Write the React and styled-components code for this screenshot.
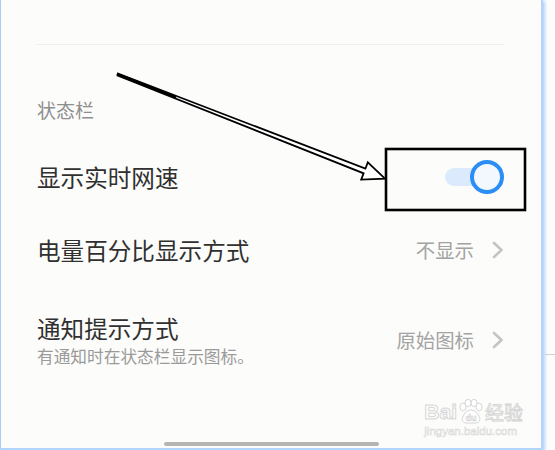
import styled, { createGlobalStyle } from "styled-components";

const GlobalStyle = createGlobalStyle`
  html, body {
    margin: 0;
    padding: 0;
    background: #fdfdfd;
  }
  body {
    font-family: "Noto Sans CJK SC", "Noto Sans", sans-serif;
    overflow: hidden;
  }
`;

function Chevron() {
  return (
    <svg width="12" height="18" viewBox="0 0 12 18">
      <polyline
        points="2,2 9.5,9 2,16"
        fill="none"
        stroke="#c4c4c4"
        strokeWidth="2.6"
        strokeLinecap="round"
        strokeLinejoin="round"
      />
    </svg>
  );
}

function Annotation() {
  return (
    <Overlay width="555" height="450" viewBox="0 0 555 450">
      <rect x="386" y="149" width="139" height="61" fill="none" stroke="#000" strokeWidth="2.6" />
      <polygon
        points="118,73.5 365.4,168.7 367.8,162.4 385,178.6 361.2,179.6 363.6,173.3 117.5,75.5"
        fill="#fff"
        stroke="#000"
        strokeWidth="1.8"
        strokeLinejoin="miter"
      />
      <line x1="118" y1="74.5" x2="175" y2="97" stroke="#000" strokeWidth="2.6" strokeLinecap="round" />
    </Overlay>
  );
}

function Watermark() {
  return (
    <Mark>
      <MarkTop>
        <MarkBig>Bai</MarkBig>
        <Paw>
          <svg width="26" height="26" viewBox="0 0 26 26">
            <g fill="#fff" stroke="#d6d6d6" strokeWidth="1">
              <ellipse cx="6" cy="8" rx="3" ry="4" />
              <ellipse cx="11" cy="4" rx="3" ry="3.6" />
              <ellipse cx="17" cy="4" rx="3" ry="3.6" />
              <ellipse cx="22" cy="8" rx="3" ry="4" />
              <path d="M5 20 Q8 11 14 11 Q20 11 23 20 Q23 25 14 24 Q5 25 5 20 Z" />
            </g>
            <text x="14" y="22" textAnchor="middle" fontSize="9" fill="#fff" stroke="#d0d0d0" strokeWidth="0.6" fontFamily="Liberation Sans, sans-serif" fontWeight="bold">du</text>
          </svg>
        </Paw>
        <MarkCn>经验</MarkCn>
      </MarkTop>
      <MarkUrl>jingyan.baidu.com</MarkUrl>
    </Mark>
  );
}

export default function App() {
  return (
    <>
      <GlobalStyle />
      <Stage>
        <Screen>
          <TopSpace />
          <Divider />
          <SectionHeader>状态栏</SectionHeader>

          <Row $h={70}>
            <Title>显示实时网速</Title>
            <Toggle>
              <Track />
              <Knob />
            </Toggle>
          </Row>

          <Row $h={76}>
            <Title>电量百分比显示方式</Title>
            <Value>
              不显示
              <Chevron />
            </Value>
          </Row>

          <Row $h={104}>
            <TextBlock>
              <Title>通知提示方式</Title>
              <Subtitle>有通知时在状态栏显示图标。</Subtitle>
            </TextBlock>
            <Value>
              原始图标
              <Chevron />
            </Value>
          </Row>

          <Spacer />
          <HomeBar />
          <Watermark />
        </Screen>
        <Side>
          <SideLine />
        </Side>
        <Annotation />
      </Stage>
    </>
  );
}

const Stage = styled.div`
  position: relative;
  width: 555px;
  height: 450px;
  display: flex;
`;

const Screen = styled.div`
  position: relative;
  flex-shrink: 0;
  width: 543px;
  height: 450px;
  padding: 0 37px 0 36px;
  box-sizing: border-box;
  background: #fcfcfa;
  border-left: 1px solid #a9cdf6;
  border-right: 2px solid #b3d5fb;
  border-bottom: 2px solid #b3d5fb;
  box-shadow: 2px 1px 3px rgba(120, 175, 240, 0.55);
  display: flex;
  flex-direction: column;
`;

const Side = styled.div`
  flex: 1;
  padding-top: 354px;
  margin-left: 2px;
`;

const SideLine = styled.div`
  height: 1px;
  background: #d2d2d2;
`;

const TopSpace = styled.div`
  height: 44px;
`;

const Divider = styled.div`
  height: 1px;
  background: #efefed;
`;

const SectionHeader = styled.div`
  margin-top: 53px;
  margin-bottom: 20px;
  font-size: 19px;
  line-height: 24px;
  color: #8e8e8e;
`;

const Row = styled.div`
  height: ${({ $h }) => $h}px;
  display: flex;
  align-items: center;
  justify-content: space-between;
`;

const TextBlock = styled.div`
  display: flex;
  flex-direction: column;
  gap: 2px;
`;

const Title = styled.div`
  font-size: 23.6px;
  line-height: 30px;
  color: #303030;
`;

const Subtitle = styled.div`
  font-size: 16.7px;
  line-height: 22px;
  color: #9a9a9a;
`;

const Value = styled.div`
  display: flex;
  align-items: center;
  gap: 18px;
  font-size: 19.4px;
  line-height: 26px;
  color: #a3a3a3;
`;

const Toggle = styled.div`
  position: relative;
  width: 59px;
  height: 34px;
  display: flex;
  align-items: center;
`;

const Track = styled.div`
  width: 52px;
  height: 18px;
  border-radius: 9px;
  background: #dbeafc;
`;

const Knob = styled.div`
  position: absolute;
  right: 0;
  top: 0;
  width: 34px;
  height: 34px;
  box-sizing: border-box;
  border-radius: 50%;
  border: 4px solid #2a8ef5;
  background: #f3f8ff;
`;

const Spacer = styled.div`
  flex: 1;
`;

const HomeBar = styled.div`
  align-self: center;
  width: 215px;
  height: 4px;
  border-radius: 2px;
  background: #b4b4b4;
  margin-bottom: 2px;
  margin-left: 1px;
`;

const Mark = styled.div`
  position: absolute;
  right: 18px;
  bottom: 10px;
  display: flex;
  flex-direction: column;
  align-items: flex-start;
  pointer-events: none;
`;

const MarkTop = styled.div`
  display: flex;
  align-items: flex-end;
`;

const MarkBig = styled.span`
  font-family: "Liberation Sans", sans-serif;
  font-weight: bold;
  font-size: 21px;
  line-height: 20px;
  color: #fff;
  -webkit-text-stroke: 1px #d6d6d6;
`;

const Paw = styled.span`
  display: flex;
  margin-bottom: -3px;
`;

const MarkCn = styled.span`
  font-size: 19px;
  line-height: 20px;
  color: #fff;
  -webkit-text-stroke: 0.8px #d2d2d2;
  margin-left: 2px;
`;

const MarkUrl = styled.span`
  margin-top: 3px;
  font-family: "Liberation Sans", sans-serif;
  font-size: 11.5px;
  line-height: 13px;
  color: #fff;
  -webkit-text-stroke: 0.6px #d8d8d8;
`;

const Overlay = styled.svg`
  position: absolute;
  left: 0;
  top: 0;
  pointer-events: none;
`;
